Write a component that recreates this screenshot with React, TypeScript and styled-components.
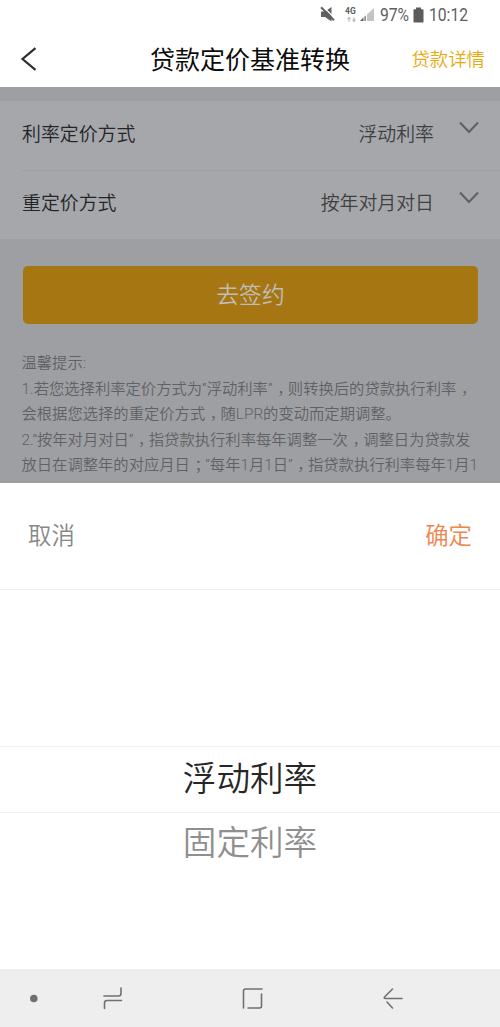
import React from "react";
import styled, { createGlobalStyle } from "styled-components";

const GlobalStyle = createGlobalStyle`
  * { box-sizing: border-box; }
  body {
    margin: 0;
    background: #fff;
    font-family: Roboto, "Noto Sans CJK SC", sans-serif;
    font-weight: 350;
  }
`;

const Screen = styled.div`
  width: 500px;
  height: 1027px;
  display: flex;
  flex-direction: column;
  overflow: hidden;
  background: #fff;
`;

const StatusBar = styled.div`
  height: 30px;
  flex: none;
  display: flex;
  align-items: center;
  padding: 0 0 0 320px;
  color: #606060;
`;

const StatusText = styled.span<{ $w: number; $ml: number }>`
  width: ${(p) => p.$w}px;
  margin-left: ${(p) => p.$ml}px;
  font-size: 18px;
  font-weight: 400;
  line-height: 30px;
  white-space: nowrap;
  transform: scaleX(0.87);
  transform-origin: left;
`;

const Battery = styled.svg`
  margin-left: 3px;
`;

const Header = styled.header`
  height: 57px;
  flex: none;
  display: grid;
  grid-template-columns: 100px 300px 100px;
  align-items: center;
`;

const BackButton = styled.button`
  border: 0;
  background: none;
  padding: 0 0 0 20px;
  display: flex;
`;

const Title = styled.h1`
  margin: 0;
  padding-top: 4px;
  text-align: center;
  font-size: 25px;
  font-weight: 400;
  line-height: 54px;
  color: #0c0c0c;
`;

const HeaderLink = styled.a`
  justify-self: end;
  margin-right: 15px;
  padding-top: 1px;
  font-size: 18.4px;
  line-height: 54px;
  white-space: nowrap;
  color: #e8a90c;
`;

const Dimmed = styled.main`
  height: 396px;
  flex: none;
  overflow: hidden;
  padding-top: 14px;
  background: #9e9fa3;
`;

const Form = styled.div`
  height: 138px;
  background: #a6a7ab;
`;

const Row = styled.div`
  height: 69px;
  margin-left: 22px;
  padding: 0 21px 2px 0;
  display: flex;
  align-items: center;
  font-size: 18.9px;
  line-height: 28px;
  & + & {
    border-top: 1px solid #9d9ea2;
  }
`;

const RowLabel = styled.span`
  flex: 1;
  color: #242528;
`;

const RowValue = styled.span`
  color: #3e3f42;
  margin-right: 25px;
`;

const Chevron = styled.svg`
  margin-bottom: 14px;
`;

const SignButton = styled.button`
  display: block;
  width: 455px;
  height: 58px;
  margin: 27px 0 0 23px;
  padding: 2px 0 0;
  border: 0;
  border-radius: 5px;
  background: #a57612;
  color: #c0bdb8;
  font: inherit;
  font-size: 22.8px;
  line-height: 56px;
`;

const Notes = styled.div`
  margin: 27px 0 0 21.5px;
  font-size: 15.32px;
  line-height: 25.5px;
  color: #606165;
  white-space: nowrap;
`;

const NoteLine = styled.p`
  margin: 0;
`;

/* Full-width punctuation set in the middle of its cell. */
const Mark = styled.span`
  display: inline-block;
  width: 1em;
  line-height: 1;
  text-indent: 0.3em;
`;

const Sheet = styled.section`
  height: 486px;
  flex: none;
  background: #fff;
`;

const SheetBar = styled.div`
  height: 107px;
  padding: 0 28px;
  display: flex;
  align-items: center;
  justify-content: space-between;
  border-bottom: 1px solid #f0f0f0;
`;

const SheetAction = styled.button<{ $color: string }>`
  border: 0;
  padding: 0;
  background: none;
  font: inherit;
  font-size: 23.4px;
  line-height: 34px;
  color: ${(p) => p.$color};
`;

const Wheel = styled.div`
  padding-top: 156px;
`;

const Option = styled.div<{ $selected?: boolean }>`
  height: ${(p) => (p.$selected ? 67 : 62)}px;
  border: solid #f1f1f1;
  border-width: ${(p) => (p.$selected ? "1px 0" : "0")};
  text-align: center;
  font-size: 33.6px;
  line-height: ${(p) => (p.$selected ? 65 : 61)}px;
  color: ${(p) => (p.$selected ? "#262626" : "#8f8f8f")};
`;

const NavBar = styled.nav`
  height: 58px;
  flex: none;
  display: flex;
  align-items: center;
  background: #eeeeee;
`;

const NavIcon = styled.svg`
  width: 500px;
  height: 58px;
  fill: none;
  stroke: #707070;
  stroke-width: 1.6;
  stroke-linecap: round;
`;

const Down = () => (
  <Chevron width="20" height="13" viewBox="0 0 20 13" fill="none" stroke="#5f6063" strokeWidth="2">
    <path d="M1 1.500 L10 11 L19 1.500" />
  </Chevron>
);

const rows = [
  { label: "利率定价方式", value: "浮动利率" },
  { label: "重定价方式", value: "按年对月对日" },
];

const notes = [
  "温馨提示:",
  "1.若您选择利率定价方式为“浮动利率”，则转换后的贷款执行利率，",
  "会根据您选择的重定价方式，随LPR的变动而定期调整。",
  "2.“按年对月对日”，指贷款执行利率每年调整一次，调整日为贷款发",
  "放日在调整年的对应月日；“每年1月1日”，指贷款执行利率每年1月1",
  "日进行调整。",
];

export default function App() {
  return (
    <Screen>
      <GlobalStyle />
      <StatusBar>
        <svg width="56" height="20" viewBox="0 0 56 20">
          <path d="M1 6.500h4l6.500-4.500v14.500l-6.500-4.500H1z" fill="#606060" />
          <path d="M2.500 1l13 13" stroke="#fff" strokeWidth="1.200" />
          <path d="M1 2.300l13 13" stroke="#606060" strokeWidth="2" />
          <text x="25" y="8.500" fontSize="8.500" fontWeight="700" fill="#606060">4G</text>
          <path d="M27 14.500h4l-2-3zM28.500 14h1v3h-1zM32 14.500h4l-2 3zM33.500 12h1v3h-1z" fill="#b5b5b5" />
          <path d="M54 3v13H40z" fill="#c4c4c4" />
          <path d="M45.500 10.500V16H40z" fill="#606060" />
          <path d="M44 11v5M46.500 9.500v6.500" stroke="#fff" strokeWidth="1" />
        </svg>
        <StatusText $w={30} $ml={4}>97%</StatusText>
        <Battery width="11" height="16" viewBox="0 0 11 16">
          <path d="M3 0.500h5v1.800h2q.5 0 .5.500v12q0 .7-.7.700H1.200q-.7 0-.7-.7v-12q0-.5.500-.5h2z" fill="#5c5c5c" />
        </Battery>
        <StatusText $w={42} $ml={5}>10:12</StatusText>
      </StatusBar>
      <Header>
        <BackButton aria-label="返回">
          <svg width="18" height="24" viewBox="0 0 18 24" fill="none" stroke="#2e2e2e" strokeWidth="2.200">
            <path d="M15.500 1.200L2.500 12l13 10.800" />
          </svg>
        </BackButton>
        <Title>贷款定价基准转换</Title>
        <HeaderLink>贷款详情</HeaderLink>
      </Header>
      <Dimmed>
        <Form>
          {rows.map((r) => (
            <Row key={r.label}>
              <RowLabel>{r.label}</RowLabel>
              <RowValue>{r.value}</RowValue>
              <Down />
            </Row>
          ))}
        </Form>
        <SignButton>去签约</SignButton>
        <Notes>
          {notes.map((line) => (
            <NoteLine key={line}>
              {line.split(/([，；])/).map((part, i) =>
                part === "，" || part === "；" ? <Mark key={i}>{part}</Mark> : part
              )}
            </NoteLine>
          ))}
        </Notes>
      </Dimmed>
      <Sheet>
        <SheetBar>
          <SheetAction $color="#888888">取消</SheetAction>
          <SheetAction $color="#ed864b">确定</SheetAction>
        </SheetBar>
        <Wheel>
          <Option $selected>浮动利率</Option>
          <Option>固定利率</Option>
        </Wheel>
      </Sheet>
      <NavBar>
        <NavIcon viewBox="0 0 500 58">
          <circle cx="33.800" cy="29.500" r="3.800" fill="#707070" stroke="none" />
          <path d="M104 27h14.500q2.500 0 2.500-2.500V19M104.500 39.500V34q0-2.500 2.500-2.500h14.500" />
          <path d="M243.500 39V22q0-2 2-2H262M261.500 25v12q0 2-2 2H248" />
          <path d="M392.500 20l-7.500 7.500q-2 2 .8 2H402M387 33l5.500 6" />
        </NavIcon>
      </NavBar>
    </Screen>
  );
}
